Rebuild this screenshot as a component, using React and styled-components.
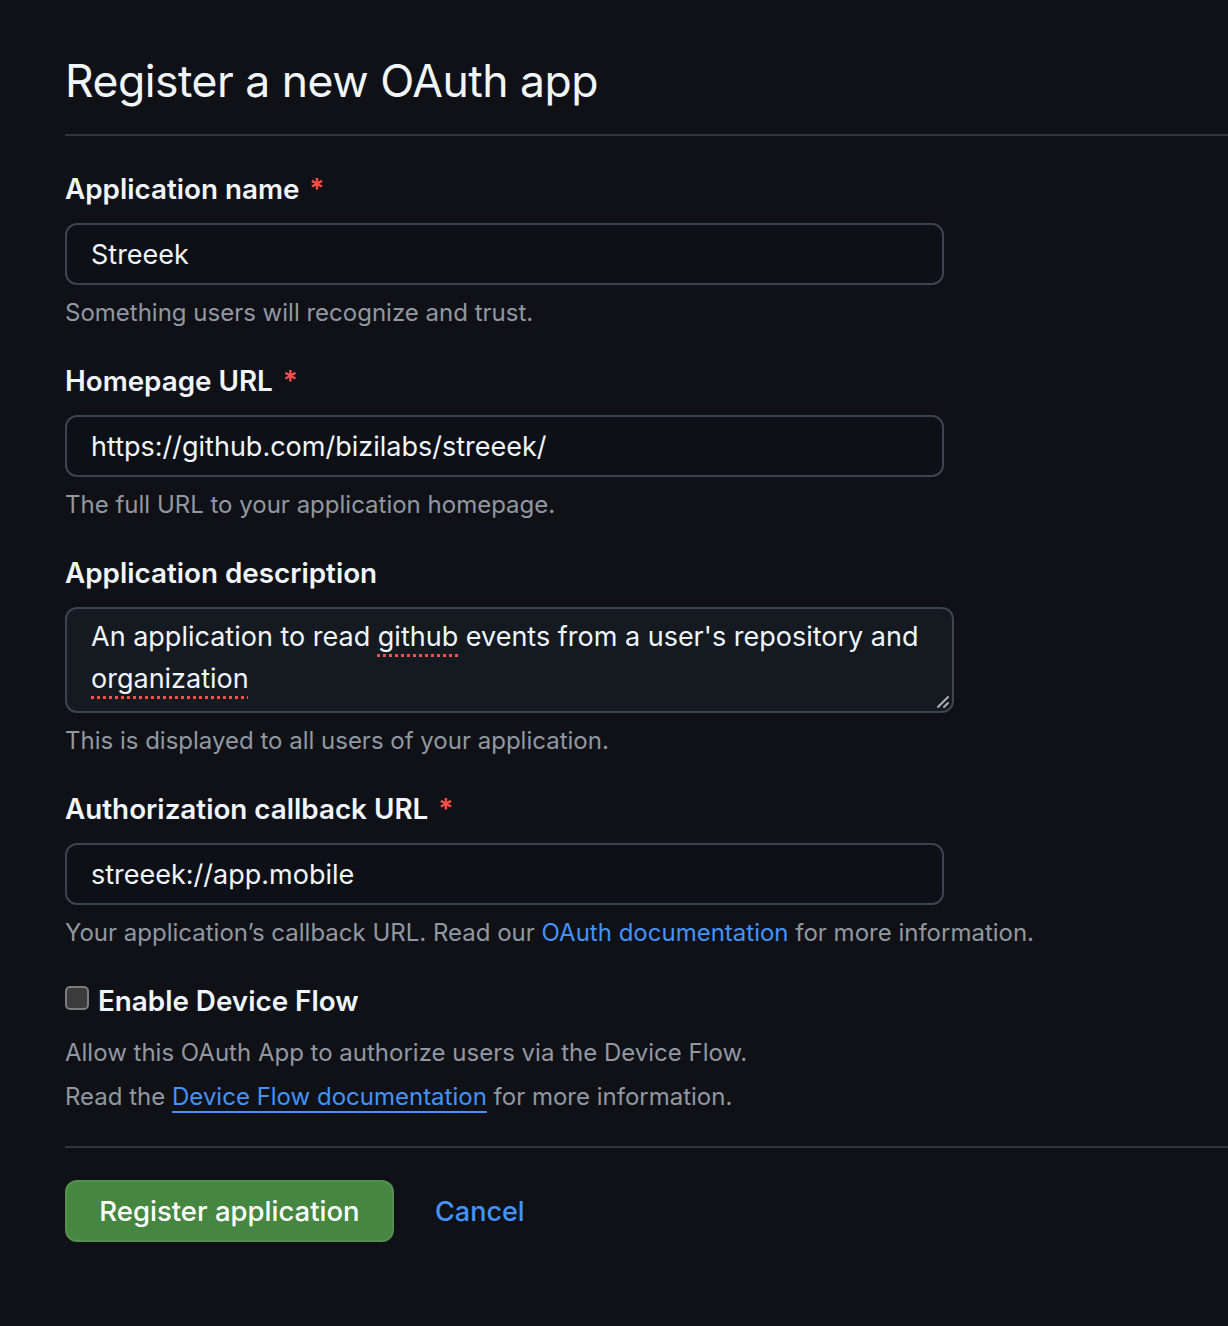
import React, { useState } from 'react'
import styled, { createGlobalStyle } from 'styled-components'

const GlobalStyle = createGlobalStyle`
    html, body {
        margin: 0;
        padding: 0;
        background: #0f1116;
    }
    body {
        font-family: Inter, "Noto Sans", "Liberation Sans", sans-serif;
        color: #f0f6fc;
    }
`

const Page = styled.div`
    min-height: 1326px;
    padding: 43px 0 0 65px;
    box-sizing: border-box;
    background: #0f1116;
`

const Subhead = styled.div`
    border-bottom: 2px solid #30363d;
    padding-bottom: 15px;
    margin-bottom: 35px;
`

const Title = styled.h1`
    margin: 0;
    font-size: 44.5px;
    font-weight: 400;
    line-height: 76px;
    letter-spacing: -0.5px;
    color: #f0f6fc;
`

const Group = styled.div`
    margin-bottom: 32px;
`

const Label = styled.label`
    display: block;
    font-size: 27.8px;
    font-weight: 600;
    line-height: 36px;
    margin-bottom: 16px;
    color: #f0f6fc;
`

const Required = styled.span`
    color: #f85149;
    margin-left: 10px;
`

const Input = styled.input`
    display: block;
    box-sizing: border-box;
    width: 879px;
    height: 62px;
    padding: 0 24px;
    border: 2px solid #3d444d;
    border-radius: 12px;
    background: #0d1117;
    color: #f0f6fc;
    font-family: inherit;
    font-size: 27px;
    outline: none;
`

const TextArea = styled.div`
    position: relative;
    box-sizing: border-box;
    width: 889px;
    height: 106px;
    padding: 7px 24px;
    border: 2px solid #3d444d;
    border-radius: 12px;
    background: #151a21;
    color: #f0f6fc;
    font-size: 27px;
    line-height: 42px;
`

const Misspelled = styled.span`
    text-decoration: underline dotted #f85149;
    text-decoration-thickness: 3px;
    text-underline-offset: 8px;
`

const Grip = styled.svg`
    position: absolute;
    right: 2px;
    bottom: 2px;
`

const Note = styled.p`
    margin: 10px 0 0;
    font-size: 24px;
    line-height: 36px;
    color: #9198a1;
`

const Link = styled.a`
    color: #4493f8;
    text-decoration: ${(p) => (p.$underline ? 'underline' : 'none')};
    text-decoration-thickness: 2px;
    text-underline-offset: 6px;
`

const CheckRow = styled.label`
    display: flex;
    align-items: center;
    gap: 9px;
    height: 36px;
    font-size: 27.8px;
    font-weight: 600;
    color: #f0f6fc;
`

const Box = styled.span`
    width: 24px;
    height: 24px;
    box-sizing: border-box;
    border: 2px solid #7d7d7d;
    border-radius: 5px;
    background: #3b3b3b;
    flex: none;
    margin-bottom: 6px;
`

const CheckNote = styled.div`
    margin-top: 12px;
    font-size: 24px;
    line-height: 44px;
    color: #9198a1;
`

const Divider = styled.hr`
    border: 0;
    border-top: 2px solid #30363d;
    margin: 27px 0 32px;
`

const Actions = styled.div`
    display: flex;
    align-items: center;
    gap: 41px;
`

const Primary = styled.button`
    width: 329px;
    height: 62px;
    border: 2px solid rgba(255, 255, 255, 0.08);
    border-radius: 12px;
    background: #458741;
    color: #ffffff;
    font-family: inherit;
    font-size: 27.5px;
    font-weight: 500;
    cursor: pointer;
`

const CancelLink = styled.a`
    color: #4493f8;
    font-size: 27px;
    font-weight: 500;
    text-decoration: none;
`

export default function App() {
    const [name, setName] = useState('Streeek')
    const [homepage, setHomepage] = useState('https://github.com/bizilabs/streeek/')
    const [callback, setCallback] = useState('streeek://app.mobile')

    return (
        <Page>
            <GlobalStyle />
            <Subhead>
                <Title>Register a new OAuth app</Title>
            </Subhead>

            <Group>
                <Label>Application name<Required>*</Required></Label>
                <Input value={name} onChange={(e) => setName(e.target.value)} />
                <Note>Something users will recognize and trust.</Note>
            </Group>

            <Group>
                <Label>Homepage URL<Required>*</Required></Label>
                <Input value={homepage} onChange={(e) => setHomepage(e.target.value)} />
                <Note>The full URL to your application homepage.</Note>
            </Group>

            <Group>
                <Label>Application description</Label>
                <TextArea role="textbox">
                    An application to read <Misspelled>github</Misspelled> events from a user's repository and{' '}
                    <Misspelled>organization</Misspelled>
                    <Grip width="14" height="14" viewBox="0 0 14 14">
                        <path d="M2 12 L12 2 M8 12 L12 8" stroke="#b0b0b0" strokeWidth="2" strokeLinecap="round" />
                    </Grip>
                </TextArea>
                <Note>This is displayed to all users of your application.</Note>
            </Group>

            <Group>
                <Label>Authorization callback URL<Required>*</Required></Label>
                <Input value={callback} onChange={(e) => setCallback(e.target.value)} />
                <Note>
                    Your application’s callback URL. Read our <Link href="#">OAuth documentation</Link> for more information.
                </Note>
            </Group>

            <CheckRow>
                <Box />
                Enable Device Flow
            </CheckRow>
            <CheckNote>
                Allow this OAuth App to authorize users via the Device Flow.
                <br />
                Read the <Link href="#" $underline>Device Flow documentation</Link> for more information.
            </CheckNote>

            <Divider />

            <Actions>
                <Primary>Register application</Primary>
                <CancelLink href="#">Cancel</CancelLink>
            </Actions>
        </Page>
    )
}
